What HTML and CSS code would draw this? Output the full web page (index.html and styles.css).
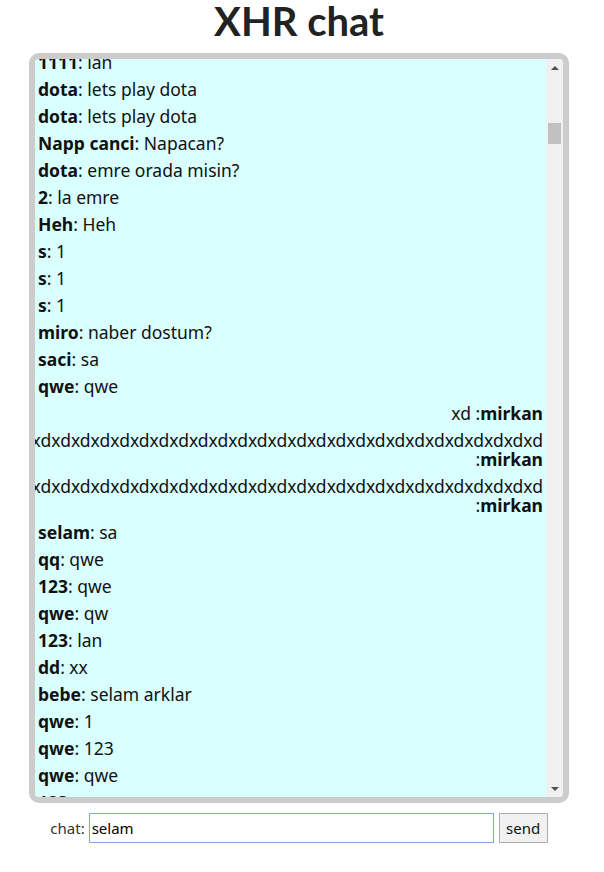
FILE: index.html
```html
<!DOCTYPE html>
<html lang="tr">
<head>
<meta charset="utf-8">
<title>XHR chat</title>
<link rel="stylesheet" href="styles.css">
</head>
<body>
<main class="page">
  <h1 class="title">XHR chat</h1>
  <div class="chatbox">
    <div class="viewport" id="viewport">
      <div class="messages" id="messages">
        <div class="msg" id="first-visible"><b>1111</b>: lan</div>
        <div class="msg"><b>dota</b>: lets play dota</div>
        <div class="msg"><b>dota</b>: lets play dota</div>
        <div class="msg"><b>Napp canci</b>: Napacan?</div>
        <div class="msg"><b>dota</b>: emre orada misin?</div>
        <div class="msg"><b>2</b>: la emre</div>
        <div class="msg"><b>Heh</b>: Heh</div>
        <div class="msg"><b>s</b>: 1</div>
        <div class="msg"><b>s</b>: 1</div>
        <div class="msg"><b>s</b>: 1</div>
        <div class="msg"><b>miro</b>: naber dostum?</div>
        <div class="msg"><b>saci</b>: sa</div>
        <div class="msg"><b>qwe</b>: qwe</div>
        <div class="msg self">xd :<b>mirkan</b></div>
        <div class="msg self">dxdxdxdxdxdxdxdxdxdxdxdxdxdxdxdxdxdxdxdxdxdxdxdxdxdxdxdxdxdxdxdxdxdxdxdxdxdxdxdxdxd :<b>mirkan</b></div>
        <div class="msg self">dxdxdxdxdxdxdxdxdxdxdxdxdxdxdxdxdxdxdxdxdxdxdxdxdxdxdxdxdxdxdxdxdxdxdxdxdxdxdxdxdxd :<b>mirkan</b></div>
        <div class="msg"><b>selam</b>: sa</div>
        <div class="msg"><b>qq</b>: qwe</div>
        <div class="msg"><b>123</b>: qwe</div>
        <div class="msg"><b>qwe</b>: qw</div>
        <div class="msg"><b>123</b>: lan</div>
        <div class="msg"><b>dd</b>: xx</div>
        <div class="msg"><b>bebe</b>: selam arklar</div>
        <div class="msg"><b>qwe</b>: 1</div>
        <div class="msg"><b>qwe</b>: 123</div>
        <div class="msg"><b>qwe</b>: qwe</div>
        <div class="msg"><b>123</b>: qwe</div>
      </div>
    </div>
    <div class="scrollbar" aria-hidden="true">
      <span class="sb-btn"><span class="arrow-up"></span></span>
      <span class="sb-track"><span class="sb-thumb"></span></span>
      <span class="sb-btn"><span class="arrow-down"></span></span>
    </div>
  </div>
  <form class="composer">
    <label class="label" for="chat">chat:</label>
    <input class="field" id="chat" type="text" value="selam" autofocus>
    <button class="send" type="button">send</button>
  </form>
</main>
<script src="script.js"></script>
</body>
</html>
```

FILE: styles.css
```css
html, body {
  margin: 0;
  padding: 0;
  background: #fff;
}
body {
  font-family: "Noto Sans", "DejaVu Sans", sans-serif;
  color: #111;
}
.page {
  width: 540px;
  padding-left: 29px;
}
.title {
  margin: 0;
  font-family: Lato, "Noto Sans", sans-serif;
  font-size: 40px;
  line-height: 42px;
  font-weight: 700;
  text-align: center;
  color: #222;
}
.chatbox {
  display: flex;
  margin-top: 11px;
  height: 738px;
  border: 6px solid #ccc;
  border-radius: 10px;
  overflow: hidden;
}
.viewport {
  flex: 1;
  min-width: 0;
  overflow: hidden;
  background: #d9ffff;
}
.scrollbar {
  width: 17px;
  display: flex;
  flex-direction: column;
  background: #f0f0f0;
}
.sb-btn {
  height: 17px;
  display: flex;
  align-items: center;
  justify-content: center;
}
.arrow-up {
  width: 0;
  height: 0;
  border-left: 4px solid transparent;
  border-right: 4px solid transparent;
  border-bottom: 4px solid #505050;
}
.arrow-down {
  width: 0;
  height: 0;
  border-left: 4px solid transparent;
  border-right: 4px solid transparent;
  border-top: 4px solid #505050;
}
.sb-track {
  flex: 1;
  display: block;
}
.sb-thumb {
  display: block;
  height: 21px;
  margin: 47px 2px 0;
  background: #c1c1c1;
}
.msg {
  padding: 4px 3px;
  font-size: 17.5px;
  line-height: 19px;
  white-space: normal;
}
.msg b {
  font-weight: 700;
}
.msg.self {
  direction: rtl;
  text-align: right;
}
.composer {
  margin: 10px 0 0;
  display: flex;
  justify-content: center;
  align-items: center;
}
.label {
  font-size: 15px;
  color: #333;
  margin-right: 4px;
}
.field {
  box-sizing: border-box;
  width: 405px;
  height: 30px;
  margin: 0;
  padding: 0 2px;
  border: 1px solid #7ea6e0;
  outline: none;
  font-family: inherit;
  font-size: 15px;
  color: #000;
  background: #fff;
}
.send {
  box-sizing: border-box;
  width: 49px;
  height: 30px;
  margin: 0 0 0 5px;
  padding: 0;
  border: 1px solid #adadad;
  border-radius: 0;
  background: #f1f1f1;
  font-family: inherit;
  font-size: 15px;
  color: #111;
}
```

FILE: script.js
```js
(function () {
  var view = document.getElementById('viewport');
  var list = document.getElementById('messages');
  var first = document.getElementById('first-visible');
  var pool = [
    ['dota', 'lets play dota'], ['s', '1'], ['qwe', 'qwe'], ['123', 'lan'],
    ['selam', 'sa'], ['qq', 'qwe'], ['miro', 'naber dostum?'], ['saci', 'sa'],
    ['dd', 'xx'], ['bebe', 'selam arklar'], ['Heh', 'Heh'], ['2', 'la emre']
  ];
  function make(i) {
    var p = pool[i % pool.length];
    var d = document.createElement('div');
    d.className = 'msg';
    var b = document.createElement('b');
    b.textContent = p[0];
    d.appendChild(b);
    d.appendChild(document.createTextNode(': ' + p[1]));
    return d;
  }
  var older = document.createDocumentFragment();
  for (var i = 0; i < 61; i++) older.appendChild(make(i));
  list.insertBefore(older, first);
  var newer = document.createDocumentFragment();
  for (var j = 0; j < 6; j++) newer.appendChild(make(j + 5));
  list.appendChild(newer);
  view.scrollTop = first.offsetTop - list.offsetTop + 10;
})();
```
